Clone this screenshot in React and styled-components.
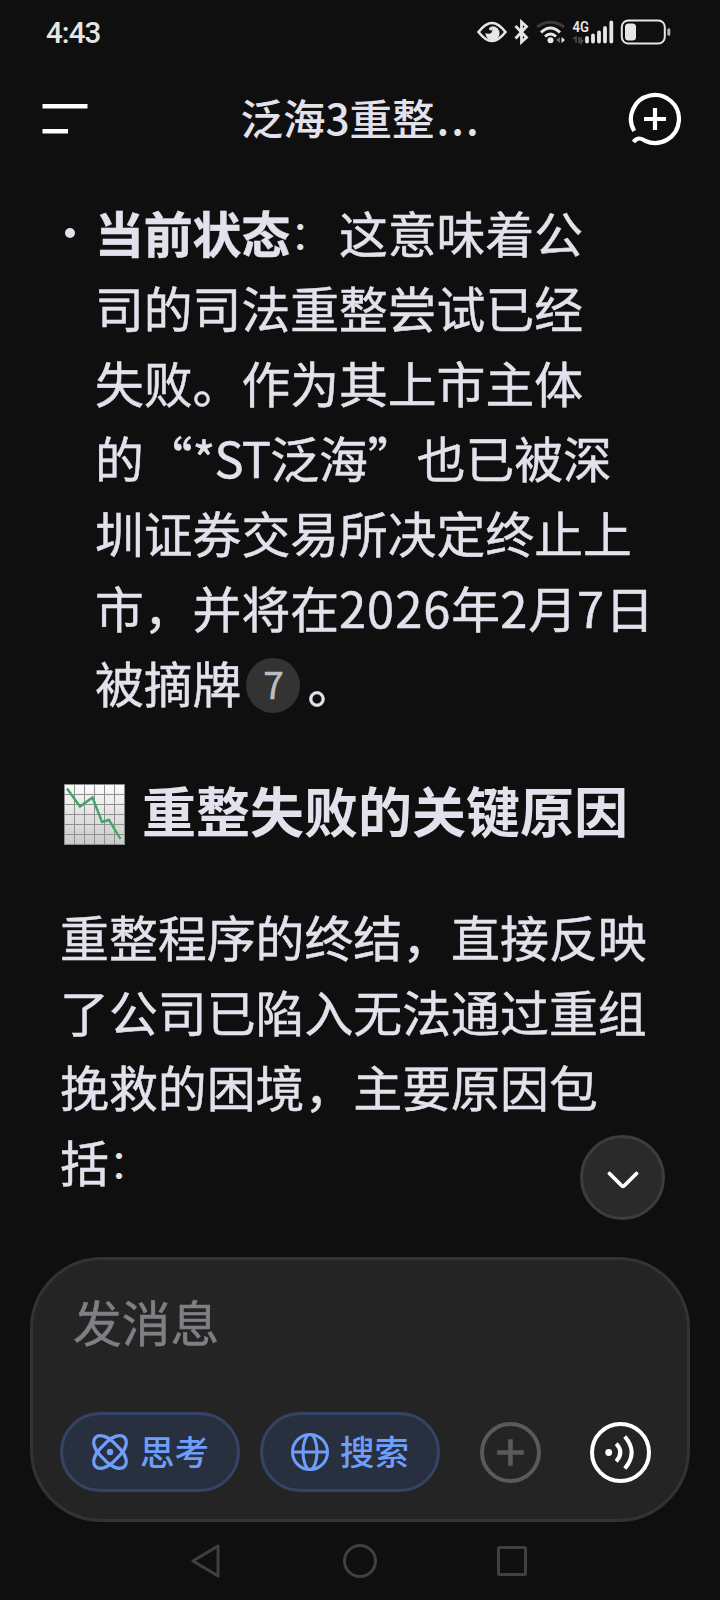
import React from "react";
import styled, { createGlobalStyle } from "styled-components";

const GlobalStyle = createGlobalStyle`
  * {
    box-sizing: border-box;
  }

  body {
    margin: 0;
    background: #0f0f0f;
    font-family: "Noto Sans CJK SC", "Noto Sans", sans-serif;
    text-spacing-trim: space-all;
    text-autospace: no-autospace;
  }

  svg {
    display: block;
    flex: none;
  }

  p, h1, h2 {
    margin: 0;
  }
`;

const Screen = styled.div`
  display: flex;
  flex-direction: column;
  width: 720px;
  height: 1600px;
  background: #0f0f0f;
  color: #e3e1ec;
  overflow: hidden;
`;

const StatusBar = styled.div`
  display: flex;
  justify-content: space-between;
  height: 64px;
  padding: 0 47px 0 46px;
`;

const Clock = styled.span`
  font-family: Roboto, sans-serif;
  font-weight: 500;
  font-size: 29.5px;
  line-height: 66px;
  letter-spacing: -0.9px;
  color: #e6e6e6;
`;

const Header = styled.header`
  display: flex;
  align-items: center;
  justify-content: space-between;
  height: 110px;
  padding: 0 38px 0 42px;
`;

const Title = styled.h1`
  padding: 0 0 5px 5px;
  font-size: 42.5px;
  font-weight: 500;
  line-height: 60px;
  white-space: nowrap;
`;

const Dots = styled.span`
  margin-left: 2px;
  letter-spacing: 2px;
`;

const Content = styled.main`
  display: flex;
  flex-direction: column;
  height: 1083px;
  padding: 20px 0 0 60px;
`;

const ListItem = styled.div`
  display: flex;
`;

const Bullet = styled.span`
  width: 10px;
  height: 10px;
  margin: 34px 20px 0 5px;
  border-radius: 50%;
  background: #e3e1ec;
`;

const Text = styled.p`
  font-size: ${(props) => props.$size || 48.8}px;
  line-height: 75px;
  -webkit-text-stroke: 0.5px currentColor;
`;

const Line = styled.span`
  display: flex;
  height: 75px;
  white-space: pre;
`;

const Latin = styled.span`
  letter-spacing: ${(props) => props.$spacing || 0}px;
`;

const Colon = styled.span`
  width: 48.8px;
  padding-top: 1px;
  font-size: 40px;
  -webkit-text-stroke: 0;
`;

const Citation = styled.span`
  width: 54px;
  height: 55px;
  margin: 14px 7px 0 5px;
  border-radius: 50%;
  background: #333;
  color: #bdbdbd;
  font-size: 37px;
  line-height: 50px;
  text-align: center;
`;

const Heading = styled.h2`
  display: flex;
  gap: 17px;
  height: 75px;
  margin: 53px 0 51px 4px;
  padding-top: 11px;
  font-size: 54px;
  font-weight: 700;
  line-height: 53px;
  white-space: nowrap;
`;

const ScrollDown = styled.button`
  position: absolute;
  left: 580px;
  top: 1135px;
  display: flex;
  align-items: center;
  justify-content: center;
  width: 85px;
  height: 85px;
  padding: 5px 0 0;
  border: 3px solid #3d3d3d;
  border-radius: 50%;
  background: #2a2a2a;
`;

const Composer = styled.section`
  display: flex;
  flex-direction: column;
  width: 660px;
  height: 265px;
  margin: 0 30px;
  padding: 28px 36px 27px 27px;
  border: 3px solid #333;
  border-radius: 72px;
  background: #242424;
`;

const Placeholder = styled.p`
  flex: 1;
  padding-left: 13px;
  color: #7f7f84;
  font-size: 48.8px;
  line-height: 66px;
  -webkit-text-stroke: 0.5px currentColor;
`;

const Actions = styled.div`
  display: flex;
  align-items: center;
`;

const Chip = styled.button`
  display: flex;
  align-items: center;
  gap: 11px;
  width: 180px;
  height: 80px;
  margin-right: 20px;
  padding: 0 0 0 28px;
  border: 3px solid #354366;
  border-radius: 40px;
  background: #28303f;
  color: #6f9dfb;
  font-family: inherit;
  font-size: 34.5px;
  font-weight: 500;
  line-height: 50px;
  white-space: nowrap;
`;

const ChipLabel = styled.span`
  padding-bottom: 5px;
`;

const RoundIcon = styled.span`
  margin-left: ${(props) => props.$left}px;
`;

const NavBar = styled.nav`
  display: flex;
  align-items: center;
  height: 78px;
  padding-left: 190px;
`;

const NavIcon = styled.svg`
  margin-right: ${(props) => props.$right || 0}px;
`;

const StatusIcons = () => (
  <svg width="200" height="64" viewBox="473 0 200 64" fill="none" stroke="#e6e6e6">
    <circle cx="492.500" cy="33.300" r="7" fill="#e6e6e6" stroke="none" />
    <circle cx="488.300" cy="29.800" r="4" fill="#0f0f0f" stroke="none" />
    <circle cx="490.800" cy="28.800" r="1.800" fill="#e6e6e6" stroke="none" />
    <path d="M478.500 32C484 25 488 23 492 23S500 25 505.500 32C500 39 496 41 492 41S484 39 478.500 32Z" strokeWidth="2.600" />
    <path d="M515.500 26L526.500 37.500L521.500 42V22L526.500 26.500L515.500 38.500" strokeWidth="2.800" />
    <path d="M537 27Q550.500 17.500 564 27" stroke="#3b3b3b" strokeWidth="3" />
    <path d="M541 32.500Q550.500 23.500 560 32.500M545 36.500Q550.500 31.500 556 36.500" strokeWidth="3" />
    <circle cx="550.500" cy="40.200" r="3" fill="#e6e6e6" stroke="none" />
    <path d="M560 37V43L556 40Z" fill="#666" stroke="none" />
    <path d="M561.500 37V43L565 40Z" fill="#e6e6e6" stroke="none" />
    <text x="572.500" y="32" fill="#e6e6e6" stroke="none" fontFamily="Roboto, sans-serif" fontWeight="600" fontSize="15.500" textLength="16.500" lengthAdjust="spacingAndGlyphs">4G</text>
    <path d="M573 39L576 37V43M579 37V43M581 37V43L583 40" stroke="#555" strokeWidth="1.400" />
    <path d="M587 38V41.500M593 35.500V41.500M599 32.500V41.500M605 28V41.500M611.300 22.500V41.500" strokeWidth="3.800" strokeLinecap="round" />
    <rect x="621.800" y="20.500" width="43" height="23" rx="6.500" strokeWidth="2" />
    <rect x="625" y="23.500" width="11" height="17" rx="3.500" fill="#e6e6e6" stroke="none" />
    <rect x="667.300" y="28.300" width="3" height="7.500" rx="1.500" fill="#b5b5b5" stroke="none" />
  </svg>
);

const MenuIcon = () => (
  <svg width="46" height="32" viewBox="0 0 46 32" fill="#fff">
    <rect x="0.500" y="1" width="45" height="4.500" />
    <rect x="0.500" y="26" width="25.500" height="4.500" />
  </svg>
);

const NewChatIcon = () => (
  <svg width="54" height="54" viewBox="628 92 54 54" fill="none" stroke="#fff" strokeWidth="4.200">
    <path d="M634.200 131A24 24 0 1 1 645.500 141C641 138 637.500 137 633.500 142" />
    <path d="M655 108V130M644 119H666" />
  </svg>
);

const ChartIcon = () => (
  <svg width="61" height="62" viewBox="0 -1 61 62" fill="none">
    <defs>
      <linearGradient id="paper" x1="0" y1="0" x2="0" y2="1">
        <stop offset="0" stopColor="#fbfbfb" />
        <stop offset="1" stopColor="#c9cbc9" />
      </linearGradient>
    </defs>
    <rect x="0.500" y="0.500" width="60" height="60" fill="url(#paper)" stroke="#8c8c8c" />
    <path
      d="M10.500 1V60M20.500 1V60M30.500 1V60M40.500 1V60M50.500 1V60M1 10.500H60M1 20.500H60M1 30.500H60M1 40.500H60M1 50.500H60"
      stroke="#909090"
    />
    <path d="M3 4.500L16 22.500L28.500 13.500L38 38L45 36L56.500 55" stroke="#46a566" strokeWidth="2.400" />
  </svg>
);

const ThinkIcon = () => (
  <svg width="38" height="38" viewBox="-19 -19 38 38" fill="none" stroke="currentColor" strokeWidth="3.200">
    <rect x="-20.500" y="-9.300" width="41" height="18.600" rx="16" ry="9.300" transform="rotate(45)" />
    <rect x="-20.500" y="-9.300" width="41" height="18.600" rx="16" ry="9.300" transform="rotate(-45)" />
    <circle r="3.200" fill="currentColor" stroke="none" />
  </svg>
);

const GlobeIcon = () => (
  <svg width="38" height="38" viewBox="-19 -19 38 38" fill="none" stroke="currentColor" strokeWidth="3">
    <circle r="17.500" />
    <ellipse rx="7" ry="17.500" />
    <path d="M-17.500 0H17.500" />
  </svg>
);

const PlusIcon = () => (
  <svg width="61" height="61" viewBox="-30.500 -30.500 61 61" fill="none" stroke="#5a5a5a" strokeWidth="4">
    <circle r="28.500" />
    <path d="M-13.300 0H13.300M0 -13.300V13.300" strokeWidth="4.600" />
  </svg>
);

const VoiceIcon = () => (
  <svg width="61" height="61" viewBox="-30.500 -30.500 61 61" fill="none" stroke="#fff" strokeWidth="4">
    <circle r="28.500" />
    <circle cx="-11.800" cy="0" r="3.400" fill="#fff" stroke="none" />
    <path d="M-4.300 -8.800Q4 0 -4.300 8.800M4.300 -16Q18 0 4.300 16" />
  </svg>
);

const App = () => {
  return (
    <Screen>
      <GlobalStyle />
      <StatusBar>
        <Clock>4:43</Clock>
        <StatusIcons />
      </StatusBar>
      <Header>
        <MenuIcon />
        <Title>泛海3重整<Dots>...</Dots></Title>
        <NewChatIcon />
      </Header>
      <Content lang="zh-CN">
        <ListItem>
          <Bullet />
          <Text>
            <Line><b>当前状态</b><Colon>：</Colon>这意味着公</Line>
            <Line>司的司法重整尝试已经</Line>
            <Line>失败。作为其上市主体</Line>
            <Line>的“<Latin $spacing={-0.8}>*ST</Latin>泛海”也已被深</Line>
            <Line>圳证券交易所决定终止上</Line>
            <Line>市，并将在<Latin $spacing={1}>2026</Latin>年<Latin $spacing={1}>2</Latin>月<Latin $spacing={1}>7</Latin>日</Line>
            <Line>被摘牌<Citation>7</Citation>。</Line>
          </Text>
        </ListItem>
        <Heading>
          <ChartIcon />
          重整失败的关键原因
        </Heading>
        <Text $size={48.9}>
          <Line>重整程序的终结，直接反映</Line>
          <Line>了公司已陷入无法通过重组</Line>
          <Line>挽救的困境，主要原因包</Line>
          <Line>括<Colon>：</Colon></Line>
        </Text>
      </Content>
      <ScrollDown>
        <svg width="32" height="18" viewBox="0 0 32 18" fill="none" stroke="#fff" strokeWidth="3.800" strokeLinecap="round">
          <path d="M2.500 2.500L14.500 14.500Q16 16 17.500 14.500L29.500 2.500" />
        </svg>
      </ScrollDown>
      <Composer>
        <Placeholder>发消息</Placeholder>
        <Actions>
          <Chip><ThinkIcon /><ChipLabel>思考</ChipLabel></Chip>
          <Chip><GlobeIcon /><ChipLabel>搜索</ChipLabel></Chip>
          <RoundIcon $left={20}><PlusIcon /></RoundIcon>
          <RoundIcon $left={49}><VoiceIcon /></RoundIcon>
        </Actions>
      </Composer>
      <NavBar>
        <NavIcon $right={123} width="30" height="34" viewBox="0 0 30 34" fill="none" stroke="#404040" strokeWidth="3" strokeLinejoin="round">
          <path d="M28 2V32L3 17Z" />
        </NavIcon>
        <NavIcon $right={120} width="34" height="34" viewBox="0 0 34 34" fill="none" stroke="#404040" strokeWidth="3">
          <circle cx="17" cy="17" r="15.500" />
        </NavIcon>
        <NavIcon width="30" height="30" viewBox="0 0 30 30" fill="none" stroke="#404040" strokeWidth="3">
          <rect x="1.500" y="1.500" width="27" height="27" rx="1" />
        </NavIcon>
      </NavBar>
    </Screen>
  );
};

export default App;
